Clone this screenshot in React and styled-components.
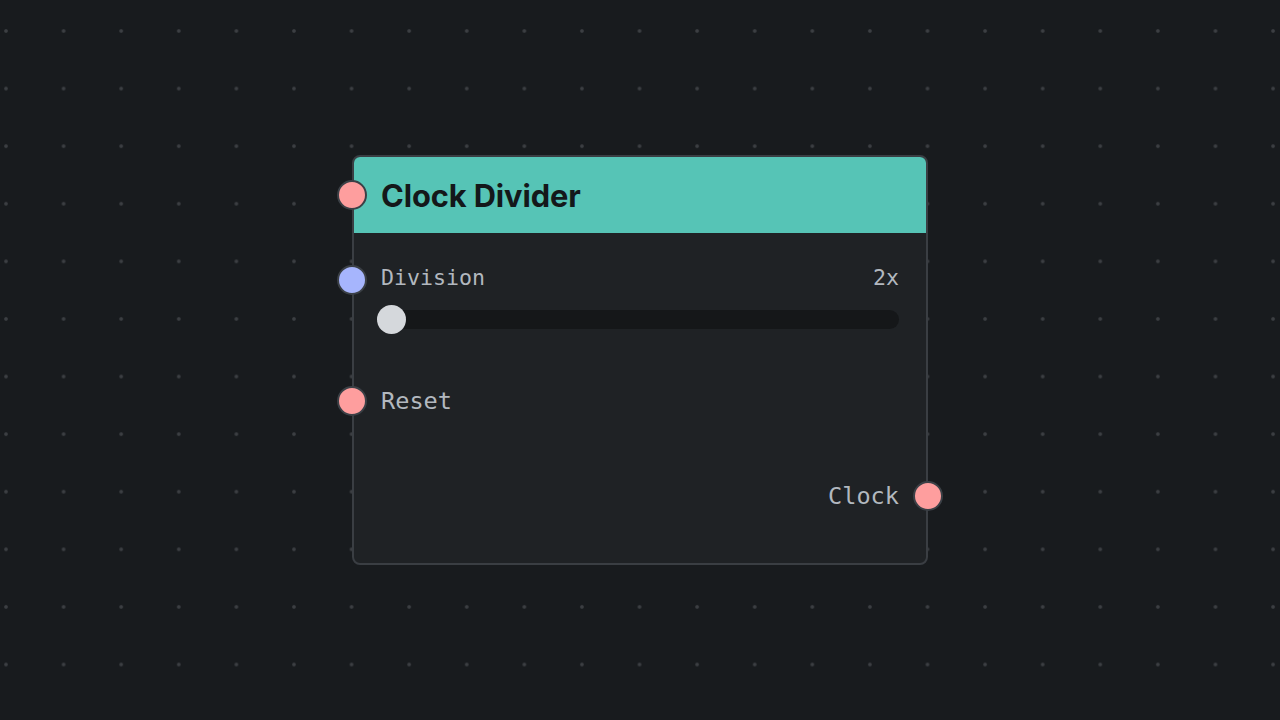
import React from "react";
import styled, { createGlobalStyle } from "styled-components";

const GlobalStyle = createGlobalStyle`
  html, body {
    margin: 0;
    padding: 0;
    background: #181b1e;
  }
`;

const Canvas = styled.div`
  width: 1280px;
  height: 720px;
  display: flex;
  align-items: center;
  justify-content: center;
  background-color: #181b1e;
  background-image: radial-gradient(circle at center, #3c3f43 0, #3c3f43 1.3px, transparent 2.3px);
  background-size: 57.6px 57.6px;
  background-position: -22.8px 2.2px;
  overflow: hidden;
`;

const Node = styled.div`
  position: relative;
  width: 576px;
  box-sizing: border-box;
  background: #1f2225;
  border: 2px solid #3a3e43;
  border-radius: 8px;
  font-family: Inter, "Noto Sans", sans-serif;
`;

const Header = styled.div`
  position: relative;
  height: 76px;
  display: flex;
  align-items: center;
  padding: 0 27px;
  background: #56c4b6;
  border-radius: 6px 6px 0 0;
`;

const Title = styled.h1`
  margin: 0;
  font-size: 30.8px;
  font-weight: 700;
  color: #14181a;
  letter-spacing: -0.1px;
`;

const Body = styled.div`
  display: flex;
  flex-direction: column;
  padding: 28px 27px 49px;
`;

const Row = styled.div`
  position: relative;
  display: flex;
  align-items: center;
  justify-content: ${(p) => (p.$out ? "flex-end" : "space-between")};
  height: ${(p) => (p.$big ? "36px" : "32px")};
  margin-top: ${(p) => p.$gap || 0}px;
`;

const Label = styled.span`
  font-family: "DejaVu Sans Mono", "Liberation Mono", monospace;
  font-size: ${(p) => (p.$big ? "23.6px" : "21.6px")};
  color: #b2b8bf;
`;

const Handle = styled.span`
  position: absolute;
  top: 50%;
  ${(p) => (p.$side === "right" ? "right: -44px;" : "left: -44px;")}
  width: 30px;
  height: 30px;
  box-sizing: border-box;
  margin-top: ${(p) => -15 + (p.$shift || 0)}px;
  border-radius: 50%;
  border: 2.4px solid #3b4046;
  background: ${(p) => p.$color};
`;

const HeaderHandle = styled(Handle)`
  left: -17px;
`;

const Slider = styled.div`
  position: relative;
  height: 29px;
  margin-top: 12px;
  display: flex;
  align-items: center;
`;

const Track = styled.div`
  flex: 1;
  height: 19px;
  border-radius: 10px;
  background: #151719;
`;

const Thumb = styled.div`
  position: absolute;
  left: -4px;
  top: 0;
  width: 29px;
  height: 29px;
  border-radius: 50%;
  background: #d5d8dc;
`;

const PINK = "#fe9e9e";
const BLUE = "#a6b5fd";

export default function App() {
  return (
    <>
      <GlobalStyle />
      <Canvas>
        <Node>
          <Header>
            <HeaderHandle $color={PINK} />
            <Title>Clock Divider</Title>
          </Header>
          <Body>
            <Row>
              <Handle $color={BLUE} $shift={3} />
              <Label>Division</Label>
              <Label>2x</Label>
            </Row>
            <Slider>
              <Track />
              <Thumb />
            </Slider>
            <Row $big $gap={49}>
              <Handle $color={PINK} />
              <Label $big>Reset</Label>
            </Row>
            <Row $big $out $gap={59}>
              <Label $big>Clock</Label>
              <Handle $color={PINK} $side="right" />
            </Row>
          </Body>
        </Node>
      </Canvas>
    </>
  );
}
